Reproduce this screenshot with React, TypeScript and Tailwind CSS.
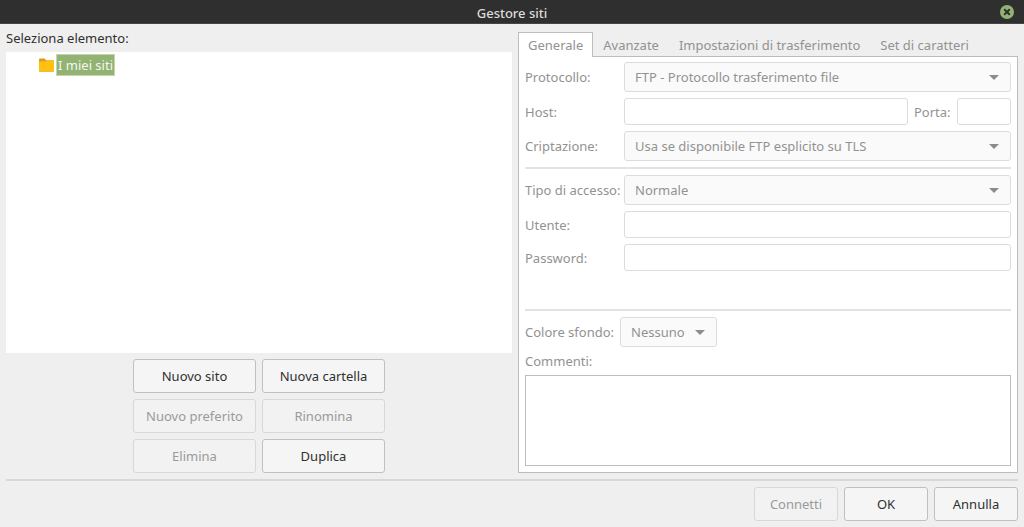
import type { FC, ReactNode } from "react";

interface ActionButtonProps {
  label: string;
  disabled?: boolean;
  className: string;
}

interface SelectBoxProps {
  id: string;
  value: string;
  className: string;
}

interface FieldRowProps {
  id: string;
  label: string;
  children: ReactNode;
}

const TABS = ["Generale", "Avanzate", "Impostazioni di trasferimento", "Set di caratteri"];

const SITE_ACTIONS = [
  { label: "Nuovo sito", disabled: false },
  { label: "Nuova cartella", disabled: false },
  { label: "Nuovo preferito", disabled: true },
  { label: "Rinomina", disabled: true },
  { label: "Elimina", disabled: true },
  { label: "Duplica", disabled: false },
];

const INPUT = "h-[27px] min-w-0 rounded-[3px] border border-[#dcdcdc] bg-white px-2";

const ActionButton: FC<ActionButtonProps> = ({ label, disabled, className }) => (
  <button
    type="button"
    disabled={disabled}
    className={`h-[34px] whitespace-nowrap rounded-[3px] border border-[#c0c0c0] bg-[#f5f5f5] text-[#303030] disabled:border-[#d8d8d8] disabled:bg-[#f2f2f2] disabled:text-[#9a9a9a] ${className}`}
  >
    {label}
  </button>
);

const SelectBox: FC<SelectBoxProps> = ({ id, value, className }) => (
  <div className={`relative ${className}`}>
    <select
      id={id}
      disabled
      className="block h-[30px] w-full appearance-none rounded-[3px] border border-[#dcdcdc] bg-[#fafafa] pl-[10px] pr-7 text-[#929292] disabled:opacity-100"
    >
      <option>{value}</option>
    </select>
    <svg
      viewBox="0 0 10 5"
      className="pointer-events-none absolute right-[12px] top-[13px] h-[5px] w-[10px] fill-[#8c8c8c]"
    >
      <path d="M0 0h10L5 5z" />
    </svg>
  </div>
);

const FieldRow: FC<FieldRowProps> = ({ id, label, children }) => (
  <div className="flex items-center gap-[6px]">
    <label htmlFor={id} className="w-[93px] shrink-0 whitespace-nowrap">
      {label}
    </label>
    {children}
  </div>
);

const Separator: FC = () => <hr className="h-[2px] shrink-0 border-0 bg-[#e2e2e2]" />;

const TitleBar: FC = () => (
  <header className="grid h-6 grid-cols-[1fr_auto_1fr] items-center border-b border-[#454545] bg-[#2f2f2f] px-[10px]">
    <h1 className="col-start-2 pt-[2px] font-medium text-[#dcdcdc]">Gestore siti</h1>
    <button type="button" aria-label="Chiudi" className="justify-self-end">
      <svg viewBox="0 0 14 14" className="block size-[14px]">
        <circle cx="7" cy="7" r="7" fill="#92b372" />
        <path d="M4.200 4.200l5.600 5.600M9.800 4.200l-5.600 5.600" stroke="#2f2f2f" strokeWidth="2" />
      </svg>
    </button>
  </header>
);

const SiteTree: FC = () => (
  <section className="flex min-w-0 flex-[506] flex-col">
    <h2 id="tree-label" className="py-[5px] leading-[18px]">
      Seleziona elemento:
    </h2>
    <ul role="tree" aria-labelledby="tree-label" className="flex-1 bg-white pl-[33px] pt-[2px]">
      <li role="treeitem" aria-selected="true" className="flex items-center gap-[2px]">
        <svg viewBox="0 0 15 14" className="h-[14px] w-[15px]">
          <path d="M0 1.5Q0 .5 1 .5h4.500l2 2H14q1 0 1 1V8H0z" fill="#d79a1c" />
          <rect y="2.500" width="15" height="11.300" rx="1" fill="#d9a520" />
          <path d="M0 3.500h6.500l1.500-1H14q1 0 1 1v8.700q0 1-1 1H1q-1 0-1-1z" fill="#ffc00f" />
        </svg>
        <span className="border border-[#c3d4b0] bg-[#92b372] px-[1px] leading-[20px] text-[#f4f7f0]">
          I miei siti
        </span>
      </li>
    </ul>
    <div className="mt-[6px] grid grid-cols-[123px_123px] justify-center gap-[6px]">
      {SITE_ACTIONS.map((action) => (
        <ActionButton key={action.label} {...action} className="w-full" />
      ))}
    </div>
  </section>
);

const GeneralPanel: FC = () => (
  <div
    role="tabpanel"
    aria-label="Generale"
    className="flex flex-1 flex-col gap-[6px] border border-[#bdbdbd] bg-white px-[6px] pb-[6px] pt-[5px]"
  >
    <FieldRow id="protocol" label="Protocollo:">
      <SelectBox id="protocol" value="FTP - Protocollo trasferimento file" className="flex-1" />
    </FieldRow>
    <FieldRow id="host" label="Host:">
      <input id="host" type="text" disabled className={`${INPUT} flex-1`} />
      <label htmlFor="port" className="w-[37px] whitespace-nowrap">
        Porta:
      </label>
      <input id="port" type="text" disabled className={`${INPUT} w-[54px]`} />
    </FieldRow>
    <FieldRow id="encryption" label="Criptazione:">
      <SelectBox
        id="encryption"
        value="Usa se disponibile FTP esplicito su TLS"
        className="flex-1"
      />
    </FieldRow>
    <Separator />
    <FieldRow id="logon" label="Tipo di accesso:">
      <SelectBox id="logon" value="Normale" className="flex-1" />
    </FieldRow>
    <FieldRow id="user" label="Utente:">
      <input id="user" type="text" disabled className={`${INPUT} flex-1`} />
    </FieldRow>
    <FieldRow id="password" label="Password:">
      <input id="password" type="password" disabled className={`${INPUT} flex-1`} />
    </FieldRow>
    <div className="h-[26px]" />
    <Separator />
    <div className="flex items-center gap-[6px]">
      <label htmlFor="background" className="w-[89px] whitespace-nowrap">
        Colore sfondo:
      </label>
      <SelectBox id="background" value="Nessuno" className="w-[97px]" />
    </div>
    <label htmlFor="comments" className="leading-[16px]">
      Commenti:
    </label>
    <textarea
      id="comments"
      disabled
      className="min-h-[60px] w-full flex-1 resize-none border border-[#bdbdbd] bg-white p-1"
    />
  </div>
);

const SiteSettings: FC = () => (
  <section className="flex min-w-0 flex-[500] flex-col pt-2 text-[#929292]">
    <div role="tablist" className="z-10 -mb-px flex">
      {TABS.map((tab, i) => (
        <button
          key={tab}
          type="button"
          role="tab"
          aria-selected={i === 0}
          className="h-[25px] whitespace-nowrap border border-b-0 border-transparent px-[9px] aria-selected:border-[#bdbdbd] aria-selected:bg-white"
        >
          {tab}
        </button>
      ))}
    </div>
    <GeneralPanel />
  </section>
);

export default function App() {
  return (
    <div className="flex min-h-screen flex-col bg-[#efefef] font-['Noto_Sans',sans-serif] text-[13px] leading-[18px] text-[#303030]">
      <TitleBar />
      <main className="flex flex-1 flex-col px-[6px] pb-[6px]">
        <div className="flex flex-1 gap-[6px]">
          <SiteTree />
          <SiteSettings />
        </div>
        <hr className="mt-[6px] h-[2px] border-0 bg-[#d8d8d8]" />
        <footer className="mt-[6px] flex justify-end gap-[6px]">
          <ActionButton label="Connetti" disabled className="w-[84px]" />
          <ActionButton label="OK" className="w-[84px]" />
          <ActionButton label="Annulla" className="w-[84px]" />
        </footer>
      </main>
    </div>
  );
}
